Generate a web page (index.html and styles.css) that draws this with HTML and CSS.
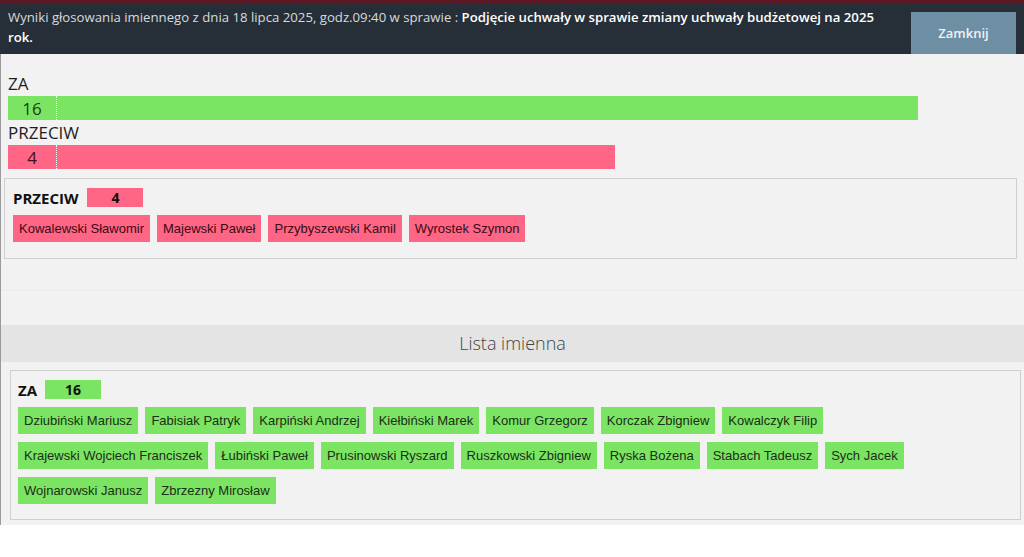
FILE: index.html
```html
<!DOCTYPE html>
<html lang="pl">
<head>
<meta charset="utf-8">
<title>Wyniki głosowania</title>
<link rel="stylesheet" href="styles.css">
</head>
<body>
<div class="topstrip"></div>
<header class="header">
  <div class="title">Wyniki głosowania imiennego z dnia 18 lipca 2025, godz.09:40 w sprawie : <b>Podjęcie uchwały w sprawie zmiany uchwały budżetowej na 2025 rok.</b></div>
  <button class="close">Zamknij</button>
</header>
<main class="content">
  <div class="bar-label">ZA</div>
  <div class="bar bar-za" style="width:910px"><span class="bar-num">16</span></div>
  <div class="bar-label">PRZECIW</div>
  <div class="bar bar-przeciw" style="width:607px"><span class="bar-num">4</span></div>

  <section class="box box-first">
    <div class="box-head"><span class="box-title">PRZECIW</span><span class="badge red">4</span></div>
    <div class="chips">
      <span class="chip red">Kowalewski Sławomir</span>
      <span class="chip red">Majewski Paweł</span>
      <span class="chip red">Przybyszewski Kamil</span>
      <span class="chip red">Wyrostek Szymon</span>
    </div>
  </section>

  <div class="spacer"></div>

  <div class="band">Lista imienna</div>

  <section class="box box-second">
    <div class="box-head"><span class="box-title">ZA</span><span class="badge green">16</span></div>
    <div class="chips">
      <span class="chip green">Dziubiński Mariusz</span>
      <span class="chip green">Fabisiak Patryk</span>
      <span class="chip green">Karpiński Andrzej</span>
      <span class="chip green">Kiełbiński Marek</span>
      <span class="chip green">Komur Grzegorz</span>
      <span class="chip green">Korczak Zbigniew</span>
      <span class="chip green">Kowalczyk Filip</span>
      <span class="chip green">Krajewski Wojciech Franciszek</span>
      <span class="chip green">Łubiński Paweł</span>
      <span class="chip green">Prusinowski Ryszard</span>
      <span class="chip green">Ruszkowski Zbigniew</span>
      <span class="chip green">Ryska Bożena</span>
      <span class="chip green">Stabach Tadeusz</span>
      <span class="chip green">Sych Jacek</span>
      <span class="chip green">Wojnarowski Janusz</span>
      <span class="chip green">Zbrzezny Mirosław</span>
    </div>
  </section>
</main>
</body>
</html>
```
FILE: styles.css
```css
* { box-sizing: border-box; }
html, body { margin: 0; padding: 0; background: #ffffff; }
body { font-family: "Open Sans", "Noto Sans", sans-serif; color: #222; }

.topstrip { height: 3px; background: #5c1822; }

.header {
  display: flex;
  background: #262f38;
  height: 51px;
}
.title {
  flex: 1;
  padding: 4px 20px 0 8px;
  font-size: 13.2px;
  line-height: 20px;
  color: #d6dadd;
}
.title b { color: #ffffff; font-weight: 600; }
.close {
  align-self: flex-end;
  width: 105px;
  height: 42px;
  margin-right: 8px;
  border: 0;
  background: #6d8ea3;
  color: #eef3f6;
  font-family: "Open Sans", sans-serif;
  font-size: 13px;
  font-weight: 600;
  padding: 0;
}

.content {
  background: #f2f2f2;
  border-left: 1px solid #9a9a9a;
  padding: 17px 0 5px 0;
}

.bar-label {
  font-size: 17px;
  line-height: 25px;
  padding-left: 7px;
  color: #1e1e1e;
}
.bar {
  display: flex;
  height: 24px;
  margin-left: 7px;
}
.bar-num {
  width: 49px;
  border-right: 1px dotted #ffffff;
  text-align: center;
  font-size: 17px;
  line-height: 25px;
  color: #1f3a1a;
}
.bar-za { background: #7be462; }
.bar-przeciw { background: #ff6584; }
.bar-przeciw .bar-num { color: #4a0f1b; }

.box {
  border: 1px solid #cfcfcf;
  background: #f2f2f2;
}
.box-first { margin: 9px 7px 0 3px; padding: 9px 8px 16px 8px; }
.box-second { margin: 8px 3px 0 9px; padding: 9px 7px 15px 7px; }

.box-head {
  display: flex;
  align-items: center;
  height: 19px;
}
.box-title {
  font-size: 15px;
  font-weight: 700;
  color: #111;
  margin-right: 9px;
}
.box-second .box-title { margin-right: 8px; }
.badge {
  width: 56px;
  height: 19px;
  text-align: center;
  font-size: 14px;
  font-weight: 700;
  line-height: 19px;
  color: #111;
}
.badge.red { background: #ff6584; }
.badge.green { background: #7be462; }

.chips {
  display: flex;
  flex-wrap: wrap;
  gap: 8px 7px;
  margin-top: 8px;
}
.chip {
  height: 27px;
  padding: 0 6px;
  font-family: "Liberation Sans", Arial, sans-serif;
  font-size: 13px;
  line-height: 27px;
  color: #2a2a2a;
}
.chip.red { background: #ff6584; color: #3a0c16; }
.chip.green { background: #7be462; color: #1c2e18; }

.spacer {
  height: 66px;
  background: linear-gradient(#f2f2f2 0, #f2f2f2 31px, #ebebeb 31px, #ebebeb 32px, #f2f2f2 32px);
}

.band {
  height: 37px;
  background: #e4e4e4;
  text-align: center;
  font-size: 18px;
  font-weight: 300;
  line-height: 37px;
  color: #444;
}
```
